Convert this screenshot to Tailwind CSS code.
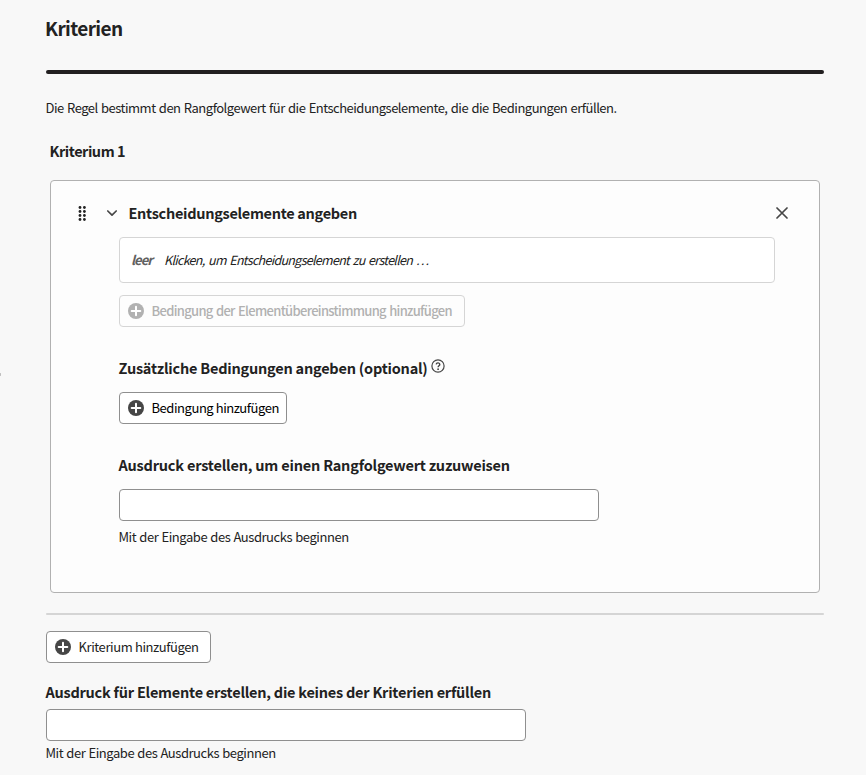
<!DOCTYPE html>
<html lang="de">
<head>
<meta charset="utf-8">
<title>Kriterien</title>
<script src="https://cdn.jsdelivr.net/npm/@tailwindcss/browser@4"></script>
</head>
<body class="relative h-[775px] w-[866px] overflow-hidden whitespace-nowrap bg-[#f8f8f8] pl-[46px] font-['Noto_Sans_CJK_SC','Noto_Sans',sans-serif] text-[13px] leading-5 text-[#222222]">
<svg width="0" height="0" class="absolute">
  <symbol id="add" viewBox="0 0 16 16"><circle cx="8" cy="8" r="8" fill="currentColor"/><path d="M8 3.7v8.6M3.7 8h8.6" stroke="#fff" stroke-width="2" stroke-linecap="round"/></symbol>
</svg>
<div class="absolute -left-1 top-[372px] h-[5px] w-[5px] rounded-full border border-[#aaaaaa]"></div>
<main class="w-[778px]">
  <h1 class="pt-[14px] text-[19px] leading-7 font-bold"><span class="-ml-px tracking-[-0.62px]">Kriterien</span></h1>
  <div class="mt-[28px] h-1 rounded-full bg-[#221f20]"></div>
  <p class="mt-6"><span class="-ml-[0.5px] [word-spacing:0.9px] tracking-[-0.5px]">Die Regel bestimmt den Rangfolgewert für die Entscheidungselemente, die die Bedingungen erfüllen.</span></p>
  <h2 class="ml-1 mt-[23px] text-[14.5px] font-bold"><span class="-ml-[0.5px] tracking-[-0.47px]">Kriterium 1</span></h2>

  <section class="ml-1 mt-[19px] h-[413px] w-[770px] rounded border border-[#b1b1b1] bg-[#fdfdfd] pl-[68px] pt-[22px]">
    <header class="-ml-[41px] flex h-5 items-center">
      <svg class="h-[16px] w-[9px]" viewBox="0 0 9 16" fill="#222"><g id="dots"><circle cx="2" cy="2.5" r="1.4"/><circle cx="2" cy="6.5" r="1.4"/><circle cx="2" cy="10.5" r="1.4"/><circle cx="2" cy="14.5" r="1.4"/></g><use href="#dots" x="4.4"/></svg>
      <svg class="ml-[19px] h-[10px] w-[12px]" viewBox="0 0 12 10" fill="none" stroke="#464646" stroke-width="1.7" stroke-linecap="round" stroke-linejoin="round"><path d="M1.8 3 6 7.1 10.2 3"/></svg>
      <h3 class="ml-[11px] text-[14.5px] font-bold"><span class="-ml-[0.5px] tracking-[-0.3px]">Entscheidungselemente angeben</span></h3>
      <svg class="ml-auto mr-[31px] h-[12px] w-[12px]" viewBox="0 0 12 12" stroke="#464646" stroke-width="1.7" stroke-linecap="round"><path d="m1 1 10 10M11 1 1 11"/></svg>
    </header>
    <div class="mt-[14px] flex h-[46px] w-[656px] items-center rounded border border-[#d5d5d5] bg-white pl-3 italic">
      <span class="w-[32px] font-bold text-[#606060]"><span class="-ml-px tracking-[-1px]">leer</span></span><span class="text-[12.5px] [word-spacing:1.4px] tracking-[-0.7px]">Klicken, um Entscheidungselement zu erstellen …</span>
    </div>
    <button class="mt-3 flex h-8 w-[346px] items-center rounded border border-[#d5d5d5] pl-2 font-medium text-[#b1b1b1]">
      <svg class="mr-2 h-4 w-4 shrink-0"><use href="#add"/></svg><span class="-ml-[0.5px] [word-spacing:1px] tracking-[-0.68px]">Bedingung der Elementübereinstimmung hinzufügen</span>
    </button>
    <h3 class="mt-[31px] flex text-[14.5px] font-bold"><span class="-ml-[0.5px] tracking-[-0.22px]">Zusätzliche Bedingungen angeben (optional)</span>
      <svg class="ml-[3px] mt-px h-[14px] w-[14px]" viewBox="0 0 14 14" fill="none" stroke="#464646" stroke-width="1.2"><circle cx="7" cy="7" r="6.1"/><path d="M5.2 5.3c.3-2 3.7-1.8 3.6.2 0 1.2-1.7 1.4-1.7 2.7" stroke-width="1.4"/><circle cx="7.1" cy="10.2" r=".9" fill="#464646" stroke="none"/></svg>
    </h3>
    <button class="mt-[14px] flex h-8 w-[168px] items-center rounded border border-[#8f8f8f] bg-white pl-2 text-black">
      <svg class="mr-2 h-4 w-4 shrink-0 text-[#464646]"><use href="#add"/></svg><span class="-ml-[0.5px] tracking-[-0.45px]">Bedingung hinzufügen</span>
    </button>
    <h3 class="mt-[31px] text-[14.5px] font-bold"><span class="-ml-[0.5px] tracking-[-0.2px]">Ausdruck erstellen, um einen Rangfolgewert zuzuweisen</span></h3>
    <input aria-label="Ausdruck" class="mt-[14px] block h-8 w-[480px] rounded border border-[#8f8f8f] bg-white">
    <p class="mt-[6px]"><span class="-ml-[0.5px] [word-spacing:0.7px] tracking-[-0.45px]">Mit der Eingabe des Ausdrucks beginnen</span></p>
  </section>

  <div class="mt-5 h-0.5 rounded-full bg-[#d5d5d5]"></div>
  <button class="mt-4 flex h-8 w-[165px] items-center rounded border border-[#8f8f8f] bg-white pl-2">
    <svg class="mr-2 h-4 w-4 shrink-0 text-[#464646]"><use href="#add"/></svg><span class="-ml-[0.5px] tracking-[-0.4px]">Kriterium hinzufügen</span>
  </button>
  <h3 class="mt-[19px] text-[14.5px] font-bold"><span class="-ml-[0.5px] tracking-[-0.24px]">Ausdruck für Elemente erstellen, die keines der Kriterien erfüllen</span></h3>
  <input aria-label="Ausdruck" class="mt-[7px] block h-8 w-[480px] rounded border border-[#8f8f8f] bg-white">
  <p class="mt-[2px]"><span class="-ml-[0.5px] [word-spacing:0.7px] tracking-[-0.45px]">Mit der Eingabe des Ausdrucks beginnen</span></p>
</main>
</body>
</html>
